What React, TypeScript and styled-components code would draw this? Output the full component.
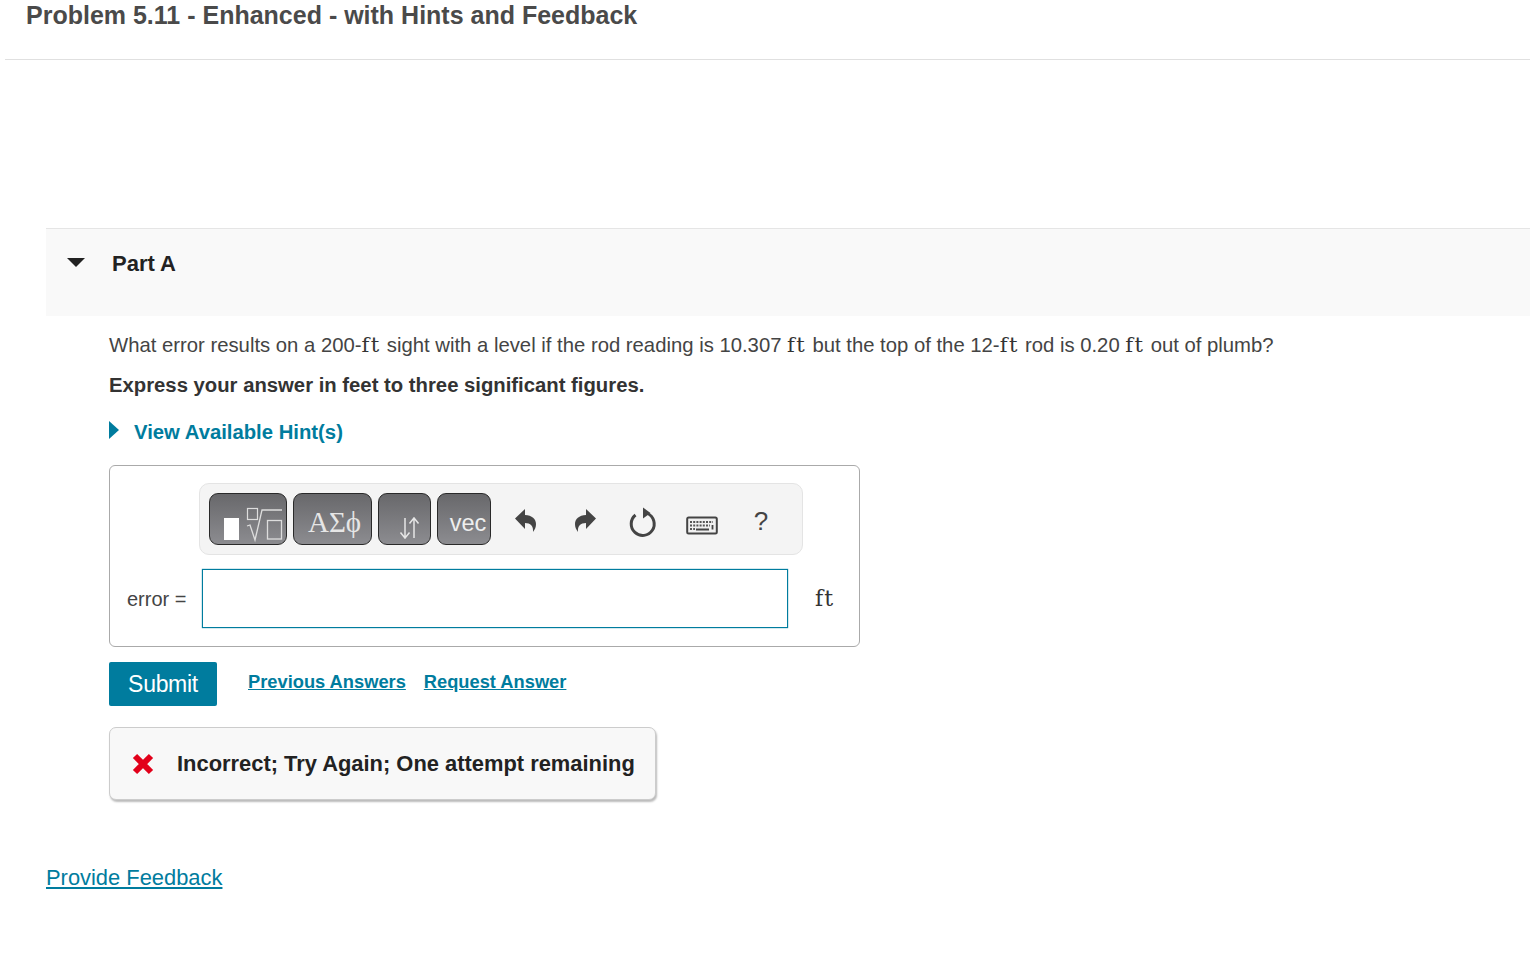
import React from 'react';
import styled, { createGlobalStyle } from 'styled-components';

const GlobalStyle = createGlobalStyle`
  html, body {
    margin: 0;
    padding: 0;
    background: #fff;
    font-family: "Liberation Sans", Arial, sans-serif;
    color: #444;
  }
`;

const Ft: React.FC = () => <MathUnit>ft</MathUnit>;

const UNDO_PATH = 'M2 11.5L12 2v6c7 .3 11 4 11 9 0 3-1 5.500-3 8 .6-6-2.500-9-8-9v6z';

const KEY_ROWS = [
  { y: 6, x1: 4, x2: 27, dash: '2 1.200' },
  { y: 9.500, x1: 4, x2: 24, dash: '2 1.200' },
  { y: 13, x1: 4, x2: 9, dash: '2 1.200' },
];

const App: React.FC = () => {
  return (
    <Page>
      <GlobalStyle />
      <Header>
        <Title>Problem 5.11 - Enhanced - with Hints and Feedback</Title>
      </Header>
      <Part>
        <PartHeader>
          <DownCaret />
          <PartTitle>Part A</PartTitle>
        </PartHeader>
        <PartBody>
          <Question>
            What error results on a 200-<Ft /> sight with a level if the rod reading is 10.307 <Ft /> but the top of the 12-<Ft /> rod is 0.20 <Ft /> out of plumb?
          </Question>
          <Instruction>Express your answer in feet to three significant figures.</Instruction>
          <HintToggle>
            <RightCaret />
            <HintLink>View Available Hint(s)</HintLink>
          </HintToggle>
          <AnswerBox>
            <Toolbar>
              <ToolButton $width={78}>
                <svg width="78" height="52" viewBox="0 0 78 52">
                  <rect x="15" y="25" width="15" height="22" fill="#fff" />
                  <rect x="38.500" y="15.500" width="10" height="11" fill="none" stroke="#ddd" strokeWidth="1.200" />
                  <path d="M38 33l3-1 5 15 7-30h20" fill="none" stroke="#ddd" strokeWidth="1.300" />
                  <rect x="58.500" y="27.500" width="14" height="18.500" fill="none" stroke="#ddd" strokeWidth="1.300" />
                </svg>
              </ToolButton>
              <ToolButton $width={79}>
                <GreekLabel>ΑΣϕ</GreekLabel>
              </ToolButton>
              <ToolButton $width={53}>
                <svg width="53" height="52" viewBox="0 0 53 52">
                  <path d="M27 25v20M22.500 39.500l4.500 5.500 4.500-5.500M36 45V25M31.500 30.500L36 25l4.500 5.500" fill="none" stroke="#e6e6e6" strokeWidth="1.500" />
                </svg>
              </ToolButton>
              <ToolButton $width={54}>
                <VecLabel>vec</VecLabel>
              </ToolButton>
              <IconGroup>
                <IconSlot $width={60} $top={21}>
                  <svg width="25" height="27" viewBox="0 0 25 27">
                    <path d={UNDO_PATH} fill="#444" />
                  </svg>
                </IconSlot>
                <IconSlot $width={61} $top={21}>
                  <svg width="25" height="27" viewBox="0 0 25 27">
                    <path d={UNDO_PATH} fill="#444" transform="matrix(-1 0 0 1 25 0)" />
                  </svg>
                </IconSlot>
                <IconSlot $width={55} $top={23}>
                  <svg width="30" height="32" viewBox="0 0 30 32">
                    <path d="M18.500 7.500a11.500 11.500 0 1 1-12 1.500" fill="none" stroke="#444" strokeWidth="3" />
                    <path d="M14 1.500l7.500 5.500-7.500 5.500z" fill="#444" />
                  </svg>
                </IconSlot>
                <IconSlot $width={62} $top={26}>
                  <svg width="32" height="19" viewBox="0 0 32 19">
                    <rect x="1.200" y="1.500" width="29.600" height="16" rx="1.500" fill="#f0f0f0" stroke="#444" strokeWidth="2" />
                    {KEY_ROWS.map((row) => (
                      <line
                        key={row.y}
                        x1={row.x1}
                        x2={row.x2}
                        y1={row.y}
                        y2={row.y}
                        stroke="#555"
                        strokeWidth="1.800"
                        strokeDasharray={row.dash}
                      />
                    ))}
                    <path d="M26.500 9v4.500M10 13.500h13" stroke="#444" strokeWidth="1.800" fill="none" />
                  </svg>
                </IconSlot>
                <IconSlot $width={56} $top={22}>
                  <HelpMark>?</HelpMark>
                </IconSlot>
              </IconGroup>
            </Toolbar>
            <AnswerRow>
              <AnswerLabel>error =</AnswerLabel>
              <AnswerInput />
              <AnswerUnit>ft</AnswerUnit>
            </AnswerRow>
          </AnswerBox>
          <Actions>
            <SubmitButton>Submit</SubmitButton>
            <ActionLink>Previous Answers</ActionLink>
            <ActionLink>Request Answer</ActionLink>
          </Actions>
          <Feedback>
            <svg width="24" height="24" viewBox="0 0 24 24">
              <path d="M4 4l16 16M20 4L4 20" stroke="#e2001a" strokeWidth="6" />
            </svg>
            <FeedbackText>Incorrect; Try Again; One attempt remaining</FeedbackText>
          </Feedback>
        </PartBody>
      </Part>
      <FooterLink>Provide Feedback</FooterLink>
    </Page>
  );
};

export default App;

const Page = styled.div`
  width: 1530px;
  height: 954px;
  overflow: hidden;
`;

const Header = styled.div`
  margin-left: 5px;
  height: 59px;
  padding-left: 21px;
  border-bottom: 1px solid #e0e0e0;
`;

const Title = styled.h1`
  margin: 0;
  font-size: 25px;
  line-height: 30px;
  font-weight: 700;
  color: #4a4a4a;
`;

const Part = styled.div`
  margin: 168px 0 0 46px;
`;

const PartHeader = styled.div`
  display: flex;
  align-items: flex-start;
  height: 66px;
  padding: 21px 0 0 21px;
  background: #f9f9f9;
  border-top: 1px solid #e5e5e5;
`;

const DownCaret = styled.span`
  width: 0;
  height: 0;
  margin-top: 8px;
  border-left: 9px solid transparent;
  border-right: 9px solid transparent;
  border-top: 9px solid #222;
`;

const PartTitle = styled.h2`
  margin: 0 0 0 27px;
  font-size: 22px;
  line-height: 28px;
  font-weight: 700;
  color: #222;
`;

const PartBody = styled.div`
  padding: 15px 0 0 63px;
`;

const Question = styled.p`
  margin: 0;
  font-size: 20.300px;
  line-height: 28px;
  color: #444;
  white-space: nowrap;
`;

const MathUnit = styled.span`
  margin-right: 0.500px;
  font-family: "DejaVu Serif", "Liberation Serif", serif;
  font-size: 21px;
  line-height: 20px;
  letter-spacing: 1.500px;
  color: #333;
`;

const Instruction = styled.p`
  margin: 12px 0 0;
  font-size: 20.300px;
  line-height: 28px;
  font-weight: 700;
  color: #333;
`;

const HintToggle = styled.div`
  display: flex;
  align-items: flex-start;
  margin-top: 19px;
  height: 28px;
`;

const RightCaret = styled.span`
  width: 0;
  height: 0;
  margin-top: 3px;
  border-top: 9px solid transparent;
  border-bottom: 9px solid transparent;
  border-left: 10px solid #007c9e;
`;

const HintLink = styled.span`
  margin-left: 15px;
  font-size: 20.300px;
  line-height: 28px;
  font-weight: 700;
  color: #007c9e;
`;

const AnswerBox = styled.div`
  box-sizing: border-box;
  width: 751px;
  height: 182px;
  margin-top: 19px;
  padding: 17px 16px 0 17px;
  border: 1px solid #aaa;
  border-radius: 6px;
`;

const Toolbar = styled.div`
  display: flex;
  align-items: center;
  gap: 6px;
  box-sizing: border-box;
  width: 604px;
  height: 72px;
  margin-left: 72px;
  padding-left: 9px;
  background: #f4f4f4;
  border: 1px solid #e4e4e4;
  border-radius: 10px;
`;

const ToolButton = styled.div<{ $width: number }>`
  flex: none;
  display: flex;
  align-items: center;
  justify-content: center;
  box-sizing: border-box;
  width: ${(p) => p.$width}px;
  height: 52px;
  color: #e8e8e8;
  background: linear-gradient(#68686b, #8c8c90);
  border: 1px solid #2a2a2a;
  border-radius: 9px;
  overflow: hidden;

  svg {
    flex: none;
    margin: -1px;
  }
`;

const GreekLabel = styled.span`
  margin: 6px 0 0 4px;
  font-family: "Liberation Serif", serif;
  font-size: 29px;
  color: #e6e6e6;
`;

const VecLabel = styled.span`
  margin: 8px 0 0 8px;
  font-size: 23.500px;
  color: #eee;
`;

const IconGroup = styled.div`
  display: flex;
  align-items: flex-start;
  align-self: stretch;
  margin-left: -2px;
`;

const IconSlot = styled.div<{ $width: number; $top: number }>`
  flex: none;
  display: flex;
  align-items: center;
  justify-content: center;
  width: ${(p) => p.$width}px;
  height: 30px;
  margin-top: ${(p) => p.$top}px;
`;

const HelpMark = styled.span`
  font-size: 26px;
  color: #444;
`;

const AnswerRow = styled.div`
  display: flex;
  align-items: center;
  margin-top: 14px;
`;

const AnswerLabel = styled.span`
  width: 75px;
  padding-top: 2px;
  font-size: 20px;
  color: #444;
`;

const AnswerInput = styled.div`
  box-sizing: border-box;
  width: 586px;
  height: 59px;
  background: #fff;
  border: 1px solid #007c9e;
  box-shadow: 0 0 1px #007c9e;
`;

const AnswerUnit = styled.span`
  margin-left: 27px;
  font-family: "DejaVu Serif", "Liberation Serif", serif;
  font-size: 22px;
  letter-spacing: 1px;
  color: #333;
`;

const Actions = styled.div`
  display: flex;
  align-items: flex-start;
  margin-top: 15px;
`;

const SubmitButton = styled.div`
  display: flex;
  align-items: center;
  justify-content: center;
  width: 108px;
  height: 44px;
  background: #007c9e;
  border-radius: 2px;
  color: #fff;
  font-size: 23px;
  letter-spacing: -0.300px;
`;

const ActionLink = styled.span`
  margin: 7px 0 0 18px;
  font-size: 18.300px;
  line-height: 26px;
  font-weight: 700;
  color: #007c9e;
  text-decoration: underline;

  &:first-of-type {
    margin-left: 31px;
  }
`;

const Feedback = styled.div`
  display: flex;
  align-items: center;
  gap: 22px;
  box-sizing: border-box;
  width: 547px;
  height: 73px;
  margin-top: 21px;
  padding-left: 21px;
  background: #f8f8f8;
  border: 1px solid #ccc;
  border-radius: 7px;
  box-shadow: 1px 2px 2px #bbb;
`;

const FeedbackText = styled.span`
  font-size: 21.900px;
  font-weight: 700;
  color: #222;
  white-space: nowrap;
`;

const FooterLink = styled.a`
  display: block;
  margin: 63px 0 0 46px;
  font-size: 21.900px;
  line-height: 30px;
  color: #007c9e;
  text-decoration: underline;
`;
